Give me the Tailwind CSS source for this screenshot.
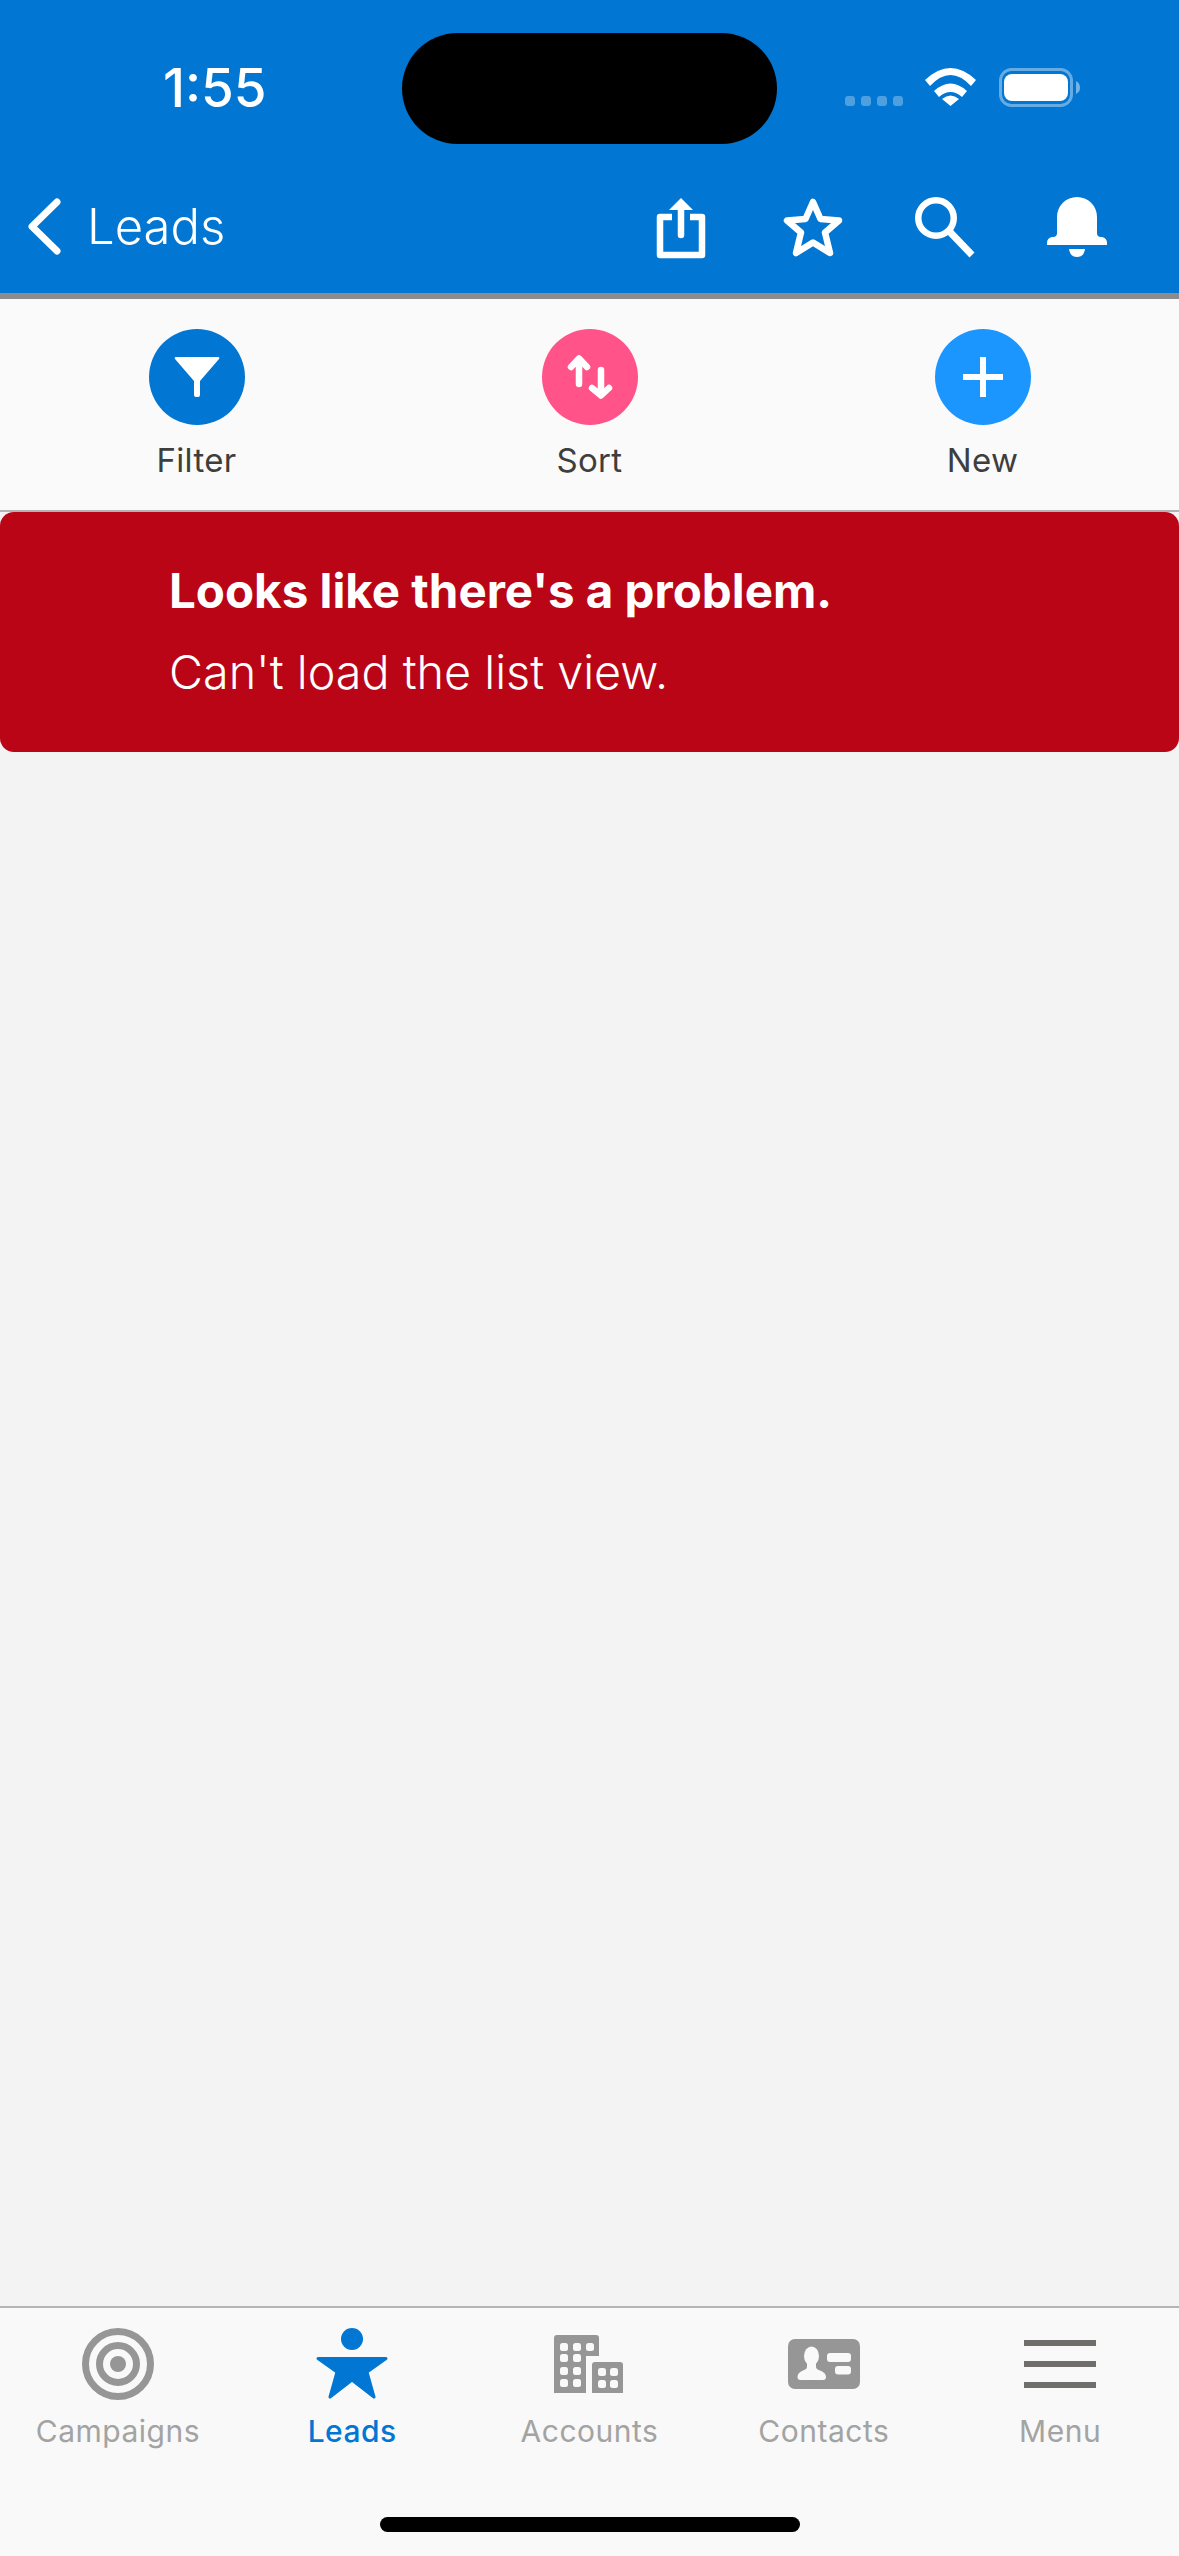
<!doctype html>
<html lang="en">
  <head>
    <meta charset="UTF-8" />
    <meta name="viewport" content="width=device-width, initial-scale=1.0" />
    <title>Leads</title>
    <script src="https://cdn.jsdelivr.net/npm/@tailwindcss/browser@4"></script>
  </head>
  <body class="bg-[#f3f3f3] font-['Inter',sans-serif]">
    <div class="w-[1179px] h-[2556px] flex flex-col overflow-hidden">

      <!-- HEADER -->
      <header class="h-[299px] shrink-0 bg-[#0176d3] border-b-[6px] border-[#8c8c8c] text-white">
        <!-- status bar -->
        <div class="relative h-[165px]">
          <div class="absolute left-[402px] top-[33px] w-[375px] h-[111px] rounded-full bg-black"></div>
          <div class="flex items-start pt-[60px] pl-[163px]">
            <span class="text-[53px] leading-[56px] font-medium">1:55</span>
            <svg class="ml-auto mr-[98px] mt-[8px]" width="236" height="39" viewBox="0 0 236 39">
              <g fill="#fff" fill-opacity=".3">
                <rect x="0" y="28" width="10" height="10" rx="3" />
                <rect x="16" y="28" width="10" height="10" rx="3" />
                <rect x="32" y="28" width="10" height="10" rx="3" />
                <rect x="48" y="28" width="10" height="10" rx="3" />
              </g>
              <g fill="#fff" transform="translate(80 0)">
                <path d="M0 12Q25.500-12 51 12L46 18Q25.500-4 5 18Z" />
                <path d="M9 23Q25.500 8 42 23L37 29Q25.500 19 14 29Z" />
                <path d="M17 31Q25.500 24 34 31L25.500 38Z" />
              </g>
              <rect x="155.500" y="1.500" width="71" height="36" rx="11" fill="none" stroke="#fff" stroke-opacity=".4" stroke-width="3" />
              <rect x="159" y="6" width="64" height="27" rx="8" fill="#fff" />
              <path d="M231 13Q235 15 235 19.500Q235 24 231 26Z" fill="#fff" fill-opacity=".45" />
            </svg>
          </div>
        </div>
        <!-- nav row -->
        <div class="flex items-start pt-[29px] pl-[24px] pr-[72px]">
          <svg width="40" height="66" viewBox="0 0 40 66" fill="none" stroke="#fff" stroke-width="7" stroke-linecap="round" stroke-linejoin="round">
            <path d="M33 8L8 32.500L33 57" />
          </svg>
          <span class="ml-[23px] mt-[4px] text-[49px] leading-[58px] font-light">Leads</span>
          <div class="ml-auto flex items-start mt-[3px]">
            <svg width="50" height="62" viewBox="0 0 50 62" fill="none" stroke="#fff" stroke-width="6.500" stroke-linejoin="round">
              <path d="M16 20H4V58H46V20H34" />
              <path d="M25 8V38" stroke-linecap="round" />
              <path d="M25 1L37 13H13Z" fill="#fff" stroke="none" />
            </svg>
            <svg class="ml-[77px]" width="60" height="62" viewBox="0 0 60 62" fill="none" stroke="#fff" stroke-width="6.500" stroke-linejoin="round">
              <path d="M30 5L37.500 22L56 23.500L42 35.500L47 56L30 45.500L13 56L18 35.500L4 23.500L22.500 22Z" />
            </svg>
            <svg class="ml-[72px]" width="62" height="62" viewBox="0 0 62 62" fill="none" stroke="#fff" stroke-width="6.500">
              <circle cx="21" cy="21" r="17.750" />
              <path d="M34 34L57 58" stroke-width="7" />
            </svg>
            <svg class="ml-[70px]" width="60" height="62" viewBox="0 0 60 62" fill="#fff">
              <path d="M10 20A20 20 0 0 1 50 20V36Q50 40 54 40H55Q60 41 60 46V48H0V46Q0 41 5 40H6Q10 40 10 36Z" />
              <path d="M22 52H38Q37 60 30 60Q23 60 22 52Z" />
            </svg>
          </div>
        </div>
      </header>

      <!-- ACTIONS -->
      <section class="h-[213px] shrink-0 bg-[#fafafa] border-b-2 border-[#b4b4b4] grid grid-cols-3 pt-[30px] text-[#3e3e3c] text-[33px] leading-[40px] tracking-[0.3px]">
        <div class="flex flex-col items-center gap-[15px]">
          <div class="w-[96px] h-[96px] rounded-full bg-[#0176d3]">
            <svg width="96" height="96" viewBox="0 0 96 96" fill="#fff">
              <path d="M27 28H69Q71 28 70 30L51 52V66Q51 68 49 68H47Q45 68 45 66V52L26 30Q25 28 27 28Z" />
            </svg>
          </div>
          <span>Filter</span>
        </div>
        <div class="flex flex-col items-center gap-[15px]">
          <div class="w-[96px] h-[96px] rounded-full bg-[#ff538a]">
            <svg width="96" height="96" viewBox="0 0 96 96" fill="none" stroke="#fff" stroke-width="6.500" stroke-linecap="round" stroke-linejoin="round">
              <path d="M37 55V30M29 38L37 29.500L45 38" />
              <path d="M59 41V66M50 59L59 66.500L67 59" />
            </svg>
          </div>
          <span>Sort</span>
        </div>
        <div class="flex flex-col items-center gap-[15px]">
          <div class="w-[96px] h-[96px] rounded-full bg-[#1b96ff]">
            <svg width="96" height="96" viewBox="0 0 96 96" fill="none" stroke="#fff" stroke-width="6">
              <path d="M48 28V68M28 48H68" />
            </svg>
          </div>
          <span>New</span>
        </div>
      </section>

      <!-- ERROR + EMPTY LIST -->
      <main class="flex-1 bg-[#f3f3f3]">
        <div class="h-[240px] rounded-[14px] bg-[#ba0517] text-white pl-[169px] pt-[52px]">
          <p class="text-[47.500px] leading-[54px] font-bold">Looks like there's a problem.</p>
          <p class="mt-[27px] text-[46.700px] leading-[54px] font-light">Can't load the list view.</p>
        </div>
      </main>

      <!-- TAB BAR -->
      <nav class="h-[250px] shrink-0 bg-[#f8f9f8] border-t-2 border-[#b4b4b4] flex flex-col text-[30px] leading-[38px] text-[#a3a3a3] tracking-[0.5px]">
        <div class="grid grid-cols-5 pt-[20px]">
          <div class="flex flex-col items-center">
            <div class="h-[72px] flex items-center">
              <svg width="72" height="72" viewBox="0 0 72 72" fill="none" stroke="#969696" stroke-width="7">
                <circle cx="36" cy="36" r="32.500" />
                <circle cx="36" cy="36" r="18.500" />
                <circle cx="36" cy="36" r="8" fill="#969696" stroke="none" />
              </svg>
            </div>
            <span class="mt-[12px]">Campaigns</span>
          </div>
          <div class="flex flex-col items-center pr-[3px] text-[#0176d3] font-medium">
            <div class="h-[72px] flex items-center">
              <svg width="72" height="72" viewBox="0 0 72 72" fill="#0176d3">
                <circle cx="36" cy="11" r="11" />
                <path d="M2 30.500H70L51 44L58 69L36 52L14 69L21 44Z" stroke="#0176d3" stroke-width="3" stroke-linejoin="round" />
              </svg>
            </div>
            <span class="mt-[12px]">Leads</span>
          </div>
          <div class="flex flex-col items-center">
            <div class="h-[72px] flex items-center">
              <svg width="70" height="58" viewBox="0 0 70 58">
                <path d="M3 0H42Q45 0 45 3V21H32V58H0V3Q0 0 3 0Z" fill="#969696" />
                <path d="M41 27H66Q69 27 69 30V58H38V30Q38 27 41 27Z" fill="#969696" />
                <g fill="#f8f9f8">
                  <rect x="6" y="8" width="8" height="8" rx="2.500" />
                  <rect x="19" y="8" width="8" height="8" rx="2.500" />
                  <rect x="32" y="8" width="8" height="8" rx="2.500" />
                  <rect x="6" y="19" width="8" height="8" rx="2.500" />
                  <rect x="19" y="19" width="8" height="8" rx="2.500" />
                  <rect x="6" y="32" width="8" height="8" rx="2.500" />
                  <rect x="19" y="32" width="8" height="8" rx="2.500" />
                  <rect x="6" y="44" width="8" height="8" rx="2.500" />
                  <rect x="19" y="44" width="8" height="8" rx="2.500" />
                  <rect x="44" y="33" width="8" height="8" rx="2.500" />
                  <rect x="56" y="33" width="8" height="8" rx="2.500" />
                  <rect x="44" y="45" width="8" height="8" rx="2.500" />
                  <rect x="56" y="45" width="8" height="8" rx="2.500" />
                </g>
              </svg>
            </div>
            <span class="mt-[12px]">Accounts</span>
          </div>
          <div class="flex flex-col items-center pr-[3px]">
            <div class="h-[72px] flex items-center">
              <svg width="72" height="50" viewBox="0 0 72 50">
                <rect width="72" height="50" rx="7" fill="#969696" />
                <g fill="#f8f9f8">
                  <ellipse cx="23.500" cy="17" rx="7.500" ry="9.500" />
                  <path d="M19 24H28V28Q28 30 32 31.500Q38 33.500 38 38Q38 41 35 41H12.500Q9.500 41 9.500 38Q9.500 33.500 15 31.500Q19 30 19 28Z" />
                  <rect x="39" y="14" width="24" height="9" rx="3" />
                  <rect x="47" y="27" width="16" height="8.500" rx="3" />
                </g>
              </svg>
            </div>
            <span class="mt-[12px]">Contacts</span>
          </div>
          <div class="flex flex-col items-center pr-[2px]">
            <div class="h-[72px] flex flex-col justify-center gap-[15px]">
              <div class="w-[72px] h-[6px] bg-[#706e6b]"></div>
              <div class="w-[72px] h-[6px] bg-[#706e6b]"></div>
              <div class="w-[72px] h-[6px] bg-[#706e6b]"></div>
            </div>
            <span class="mt-[12px]">Menu</span>
          </div>
        </div>
        <div class="mt-[67px] mx-auto w-[420px] h-[15px] rounded-full bg-black"></div>
      </nav>
    </div>
  </body>
</html>
